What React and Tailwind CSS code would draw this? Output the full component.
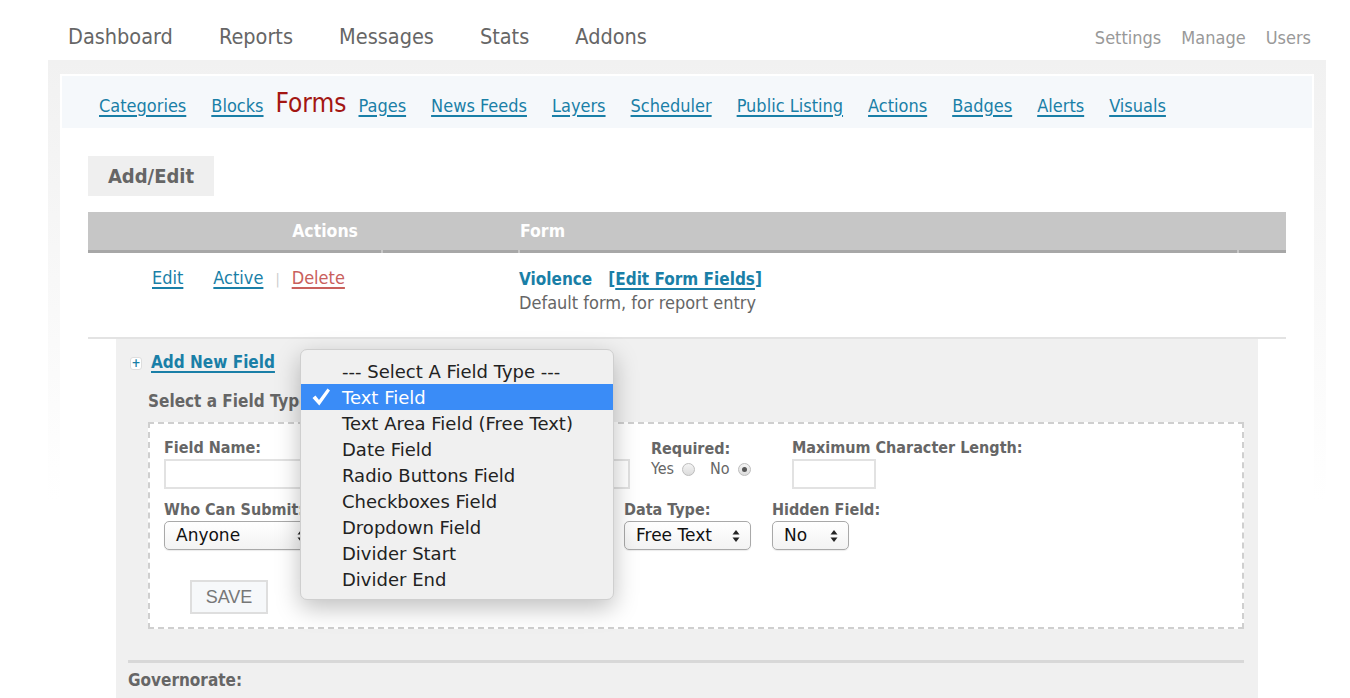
import React from "react";

const link = "text-[#1a7fa7] underline decoration-2 underline-offset-[3px]";

function Arrows() {
  return (
    <svg width="8" height="14" viewBox="0 0 8 14" className="shrink-0">
      <path d="M4 1 L7.5 5.5 L0.5 5.5 Z" fill="#222" />
      <path d="M4 13 L7.5 8.5 L0.5 8.5 Z" fill="#222" />
    </svg>
  );
}

function MacSelect({ value, width }) {
  return (
    <div
      className={`flex items-center justify-between h-[29px] ${width} pl-[11px] pr-[10px] rounded-[5px] border border-[#a9a9a9] bg-gradient-to-b from-white to-[#f3f3f3] shadow-[0_1px_1px_rgba(0,0,0,0.08)] font-['DejaVu_Sans',sans-serif] text-[17px] text-[#111]`}
    >
      <span>{value}</span>
      <Arrows />
    </div>
  );
}

function Radio({ checked }) {
  return (
    <span className="inline-flex items-center justify-center w-[13px] h-[13px] rounded-full border border-[#bdbdbd] bg-gradient-to-b from-[#f4f4f4] to-[#dcdcdc]">
      {checked && <span className="w-[5px] h-[5px] rounded-full bg-[#555]" />}
    </span>
  );
}

const fieldTypes = [
  "--- Select A Field Type ---",
  "Text Field",
  "Text Area Field (Free Text)",
  "Date Field",
  "Radio Buttons Field",
  "Checkboxes Field",
  "Dropdown Field",
  "Divider Start",
  "Divider End",
];

export default function App() {
  const subNav = ["Categories", "Blocks", "Forms", "Pages", "News Feeds", "Layers", "Scheduler", "Public Listing", "Actions", "Badges", "Alerts", "Visuals"];

  return (
    <div className="relative min-h-screen bg-white font-['DejaVu_Sans_Condensed','DejaVu_Sans',sans-serif]">
      {/* top bar */}
      <header className="flex items-center justify-between h-[60px] pt-[14px] pl-[68px] pr-[39px]">
        <nav className="flex gap-[46px] text-[21.5px] text-[#666]">
          <span>Dashboard</span>
          <span>Reports</span>
          <span>Messages</span>
          <span>Stats</span>
          <span>Addons</span>
        </nav>
        <nav className="flex gap-[20px] text-[18px] text-[#999]">
          <span>Settings</span>
          <span>Manage</span>
          <span>Users</span>
        </nav>
      </header>

      <div className="ml-[48px] w-[1278px] px-[12px] pt-[14px] bg-[linear-gradient(#f1f1f1,#ffffff_440px)]">
        <div className="bg-white p-[2px] pb-0 min-h-[640px]">
          {/* sub nav */}
          <div className="flex items-center h-[52px] pt-[2px] pl-[37px] bg-[#f5f8fb]">
            <div className="flex items-baseline gap-[25px] text-[18px]">
              {subNav.map((s) =>
                s === "Forms" ? (
                  <span key={s} className="mx-[-13px] text-[26px] text-[#a31612]">
                    {s}
                  </span>
                ) : (
                  <span key={s} className={link}>
                    {s}
                  </span>
                )
              )}
            </div>
          </div>

          <div className="px-[26px] pt-[28px]">
            <div className="flex items-center justify-center w-[126px] h-[40px] bg-[#efefef] text-[20px] font-bold text-[#666]">
              Add/Edit
            </div>

            {/* table header */}
            <div className="mt-[16px] grid grid-cols-[293px_135px_717px_47px] gap-x-[2px] bg-[#c6c6c6] text-[17.5px] font-bold text-white">
              <div className="h-[41px] flex items-center justify-end pr-[23px] border-b-[3px] border-[#a7a7a7]">Actions</div>
              <div className="h-[41px] border-b-[3px] border-[#a7a7a7]" />
              <div className="h-[41px] flex items-center pl-0 border-b-[3px] border-[#a7a7a7]">Form</div>
              <div className="h-[41px] border-b-[3px] border-[#a7a7a7]" />
            </div>

            {/* table row */}
            <div className="grid grid-cols-[293px_137px_1fr] h-[86px] pt-[14px] border-b-2 border-[#e3e3e3] text-[17px]">
              <div className="-mt-[3px] flex items-baseline pl-[64px] text-[18px]">
                <span className={link}>Edit</span>
                <span className={`ml-[30px] ${link}`}>Active</span>
                <span className="mx-[12px] text-[#ccc] text-[14px]">|</span>
                <span className="text-[#c9605c] underline decoration-2 underline-offset-[3px]">Delete</span>
              </div>
              <div />
              <div className="pl-[1px]">
                <div className="flex items-baseline font-bold text-[#1a7fa7]">
                  <span>Violence</span>
                  <span className="ml-[16px]">
                    [<span className="underline decoration-2 underline-offset-[3px]">Edit Form Fields</span>]
                  </span>
                </div>
                <div className="-mt-[4px] text-[18px] text-[#666]">Default form, for report entry</div>
              </div>
            </div>

            {/* add new field panel */}
            <div className="mx-[28px] bg-[#f0f0f0] pt-[13px] pb-[30px] pl-[14px] pr-[14px]">
              <div className="flex items-center h-[22px]">
                <span className="flex items-center justify-center w-[12px] h-[13px] rounded-[3px] border border-[#ddd] bg-white text-[#1a7fa7] text-[12px] font-bold leading-none">+</span>
                <span className={`ml-[9px] text-[17px] font-bold ${link}`}>Add New Field</span>
              </div>
              <div className="mt-[19px] pl-[18px] h-[18px] flex items-center text-[17px] font-bold text-[#666]">
                Select a Field Type:
              </div>

              <div className="mt-[11px] ml-[18px] border-2 border-dashed border-[#cfcfcf] bg-white pt-[15px] pb-[13px] pl-[14px] text-[#666]">
                <div className="flex">
                  <div className="w-[487px]">
                    <div className="h-[18px] flex items-center text-[16px] font-bold">Field Name:</div>
                    <div className="mt-[2px] w-[466px] h-[30px] border-2 border-[#e2e2e2] bg-white" />
                  </div>
                  <div className="w-[141px] pt-[1px]">
                    <div className="h-[18px] flex items-center text-[16px] font-bold">Required:</div>
                    <div className="mt-[2px] h-[18px] flex items-center text-[16px]">
                      Yes
                      <span className="ml-[8px] flex"><Radio /></span>
                      <span className="ml-[15px]">No</span>
                      <span className="ml-[8px] flex"><Radio checked /></span>
                    </div>
                  </div>
                  <div>
                    <div className="h-[18px] flex items-center text-[16px] font-bold">Maximum Character Length:</div>
                    <div className="mt-[2px] w-[84px] h-[30px] border-2 border-[#e2e2e2] bg-white" />
                  </div>
                </div>

                <div className="flex mt-[12px]">
                  <div className="w-[460px]">
                    <div className="h-[18px] flex items-center text-[16px] font-bold">Who Can Submit:</div>
                    <div className="mt-[2px]">
                      <MacSelect value="Anyone" width="w-[152px]" />
                    </div>
                  </div>
                  <div className="w-[148px]">
                    <div className="h-[18px] flex items-center text-[16px] font-bold">Data Type:</div>
                    <div className="mt-[2px]">
                      <MacSelect value="Free Text" width="w-[127px]" />
                    </div>
                  </div>
                  <div>
                    <div className="h-[18px] flex items-center text-[16px] font-bold">Hidden Field:</div>
                    <div className="mt-[2px]">
                      <MacSelect value="No" width="w-[77px]" />
                    </div>
                  </div>
                </div>

                <div className="mt-[30px] ml-[26px] flex items-center justify-center w-[78px] h-[34px] border-2 border-[#dedede] bg-[#f6f8fa] font-['Liberation_Sans',sans-serif] text-[18px] text-[#777]">
                  SAVE
                </div>
              </div>

              <div className="mt-[31px] -ml-[2px] h-[3px] bg-[#d8d8d8]" />
              <div className="mt-[9px] -ml-[2px] h-[18px] flex items-center text-[17px] font-bold text-[#666]">
                Governorate:
              </div>
            </div>
          </div>
        </div>
      </div>

      {/* open select menu */}
      <div className="absolute left-[300px] top-[349px] w-[314px] h-[251px] pt-[8px] rounded-[7px] border border-[#cfcfcf] bg-[#f0f0f0] shadow-[0_8px_24px_rgba(0,0,0,0.25)] font-['DejaVu_Sans',sans-serif] text-[18px] text-[#222]">
        {fieldTypes.map((t, i) => (
          <div
            key={t}
            className={`relative flex items-center h-[26px] pl-[41px] ${i === 1 ? "bg-[#3a8cf7] text-white" : ""}`}
          >
            {i === 1 && (
              <svg width="20" height="20" viewBox="0 0 20 20" className="absolute left-[10px] top-[3px]">
                <path d="M1.5 11 L4.5 8.5 L8 13 L16.5 1.5 L19 3.5 L8.3 18.5 Z" fill="white" />
              </svg>
            )}
            {t}
          </div>
        ))}
      </div>
    </div>
  );
}
